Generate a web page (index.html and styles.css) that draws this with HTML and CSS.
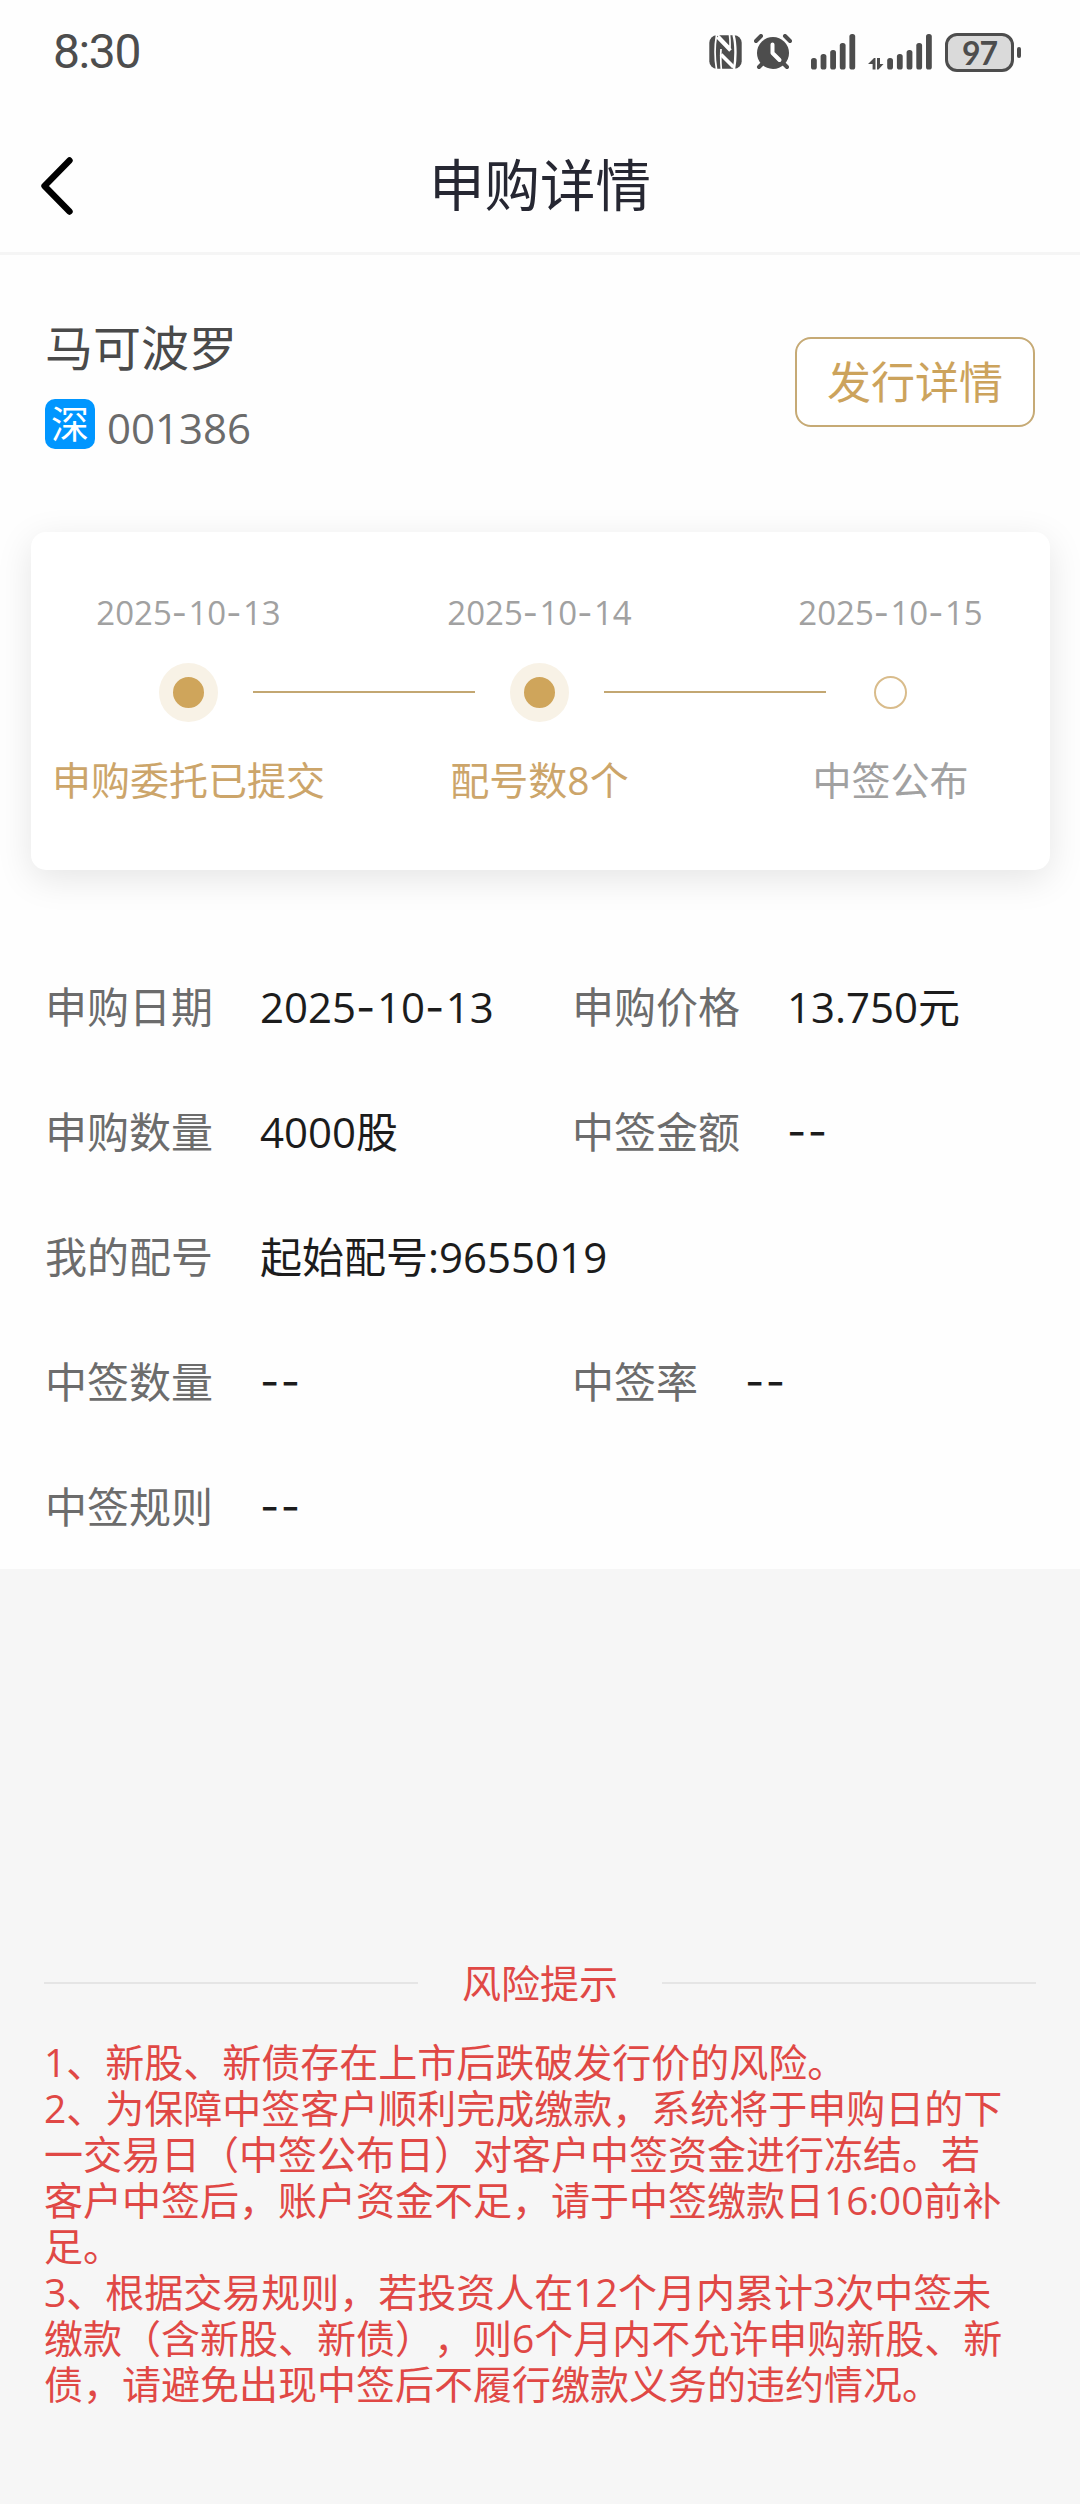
FILE: index.html
```
<!DOCTYPE html>
<html lang="zh-CN">
<head>
  <meta charset="UTF-8" />
  <meta name="viewport" content="width=device-width, initial-scale=1.0" />
  <title>申购详情</title>
  <link rel="stylesheet" href="styles.css">
</head>
<body>
<div class="page">
  <div class="status-bar">
    <div class="time">8:30</div>
    <div class="status-icons">
      <svg class="nfc" width="33" height="34" viewBox="0 0 33 34">
        <rect x="0.3" y="0.3" width="32.4" height="33.4" rx="7.5" fill="#4d4d4d" />
        <path d="M7.5 34 C5.8 24 5.8 10 7.5 0 H9 L21 12.5 C21.2 8 21 4 20.5 0 M12.3 34 C11.6 26 11.6 20 12 14" fill="none" stroke="#fff" stroke-width="1.7" />
        <path d="M8.5 2 L21.5 15.5 M12 19.5 L24.5 32" fill="none" stroke="#fff" stroke-width="3.6" />
        <path d="M24.5 0 C27 9 27 24 25 34" fill="none" stroke="#fff" stroke-width="2.4" />
      </svg>
      <svg class="alarm" width="38" height="36" viewBox="0 0 38 36">
        <circle cx="19" cy="19" r="16" fill="#4d4d4d" />
        <path d="M2 7 L7 2 M31 2 L36 7 M8 30 L5 33 M30 30 L33 33" stroke="#4d4d4d" stroke-width="4" stroke-linecap="round" />
        <path d="M18.5 10.5 V19 L25.5 26" fill="none" stroke="#fff" stroke-width="4" stroke-linecap="round" stroke-linejoin="round" />
      </svg>
      <svg class="signal" width="45" height="36" viewBox="0 0 45 36" fill="#4d4d4d">
        <rect x="0" y="24" width="5.8" height="11.5" rx="2.6" />
        <rect x="9.6" y="20" width="5.8" height="15.5" rx="2.6" />
        <rect x="19.2" y="16" width="5.8" height="19.5" rx="2.6" />
        <rect x="28.8" y="9" width="5.8" height="26.5" rx="2.6" />
        <rect x="38.4" y="0" width="5.8" height="35.5" rx="2.6" />
      </svg>
      <svg class="signal-data" width="65" height="36" viewBox="0 0 65 36" fill="#4d4d4d">
        <path d="M0 30 L6 24 H7.5 V35.5 H4.6 V30 Z M9 24 H12 V30 H15.5 L10.5 35.5 H9 Z" />
        <rect x="19.2" y="24" width="5.8" height="11.5" rx="2.6" />
        <rect x="28.9" y="20" width="5.8" height="15.5" rx="2.6" />
        <rect x="38.6" y="16" width="5.8" height="19.5" rx="2.6" />
        <rect x="48.3" y="9" width="5.8" height="26.5" rx="2.6" />
        <rect x="58" y="0" width="5.8" height="35.5" rx="2.6" />
      </svg>
      <div class="battery">97</div>
      <div class="battery-tip"></div>
    </div>
  </div>

  <div class="header">
    <svg class="back" width="34" height="60" viewBox="0 0 34 60">
      <path d="M29.5 4.5 L4.5 30 L29.5 55.5" fill="none" stroke="#000" stroke-width="6.4" stroke-linecap="round" stroke-linejoin="round" />
    </svg>
    <h1>申购详情</h1>
  </div>

  <div class="stock">
    <div class="stock-info">
      <div class="stock-name">马可波罗</div>
      <div class="stock-code"><span class="market">深</span>001386</div>
    </div>
    <button class="detail-btn">发行详情</button>
  </div>

  <div class="steps">
    <div class="card">
      <div class="step done">
        <div class="date">2025<span class="dash">-</span>10<span class="dash">-</span>13</div>
        <div class="dot"></div>
        <div class="step-name">申购委托已提交</div>
      </div>
      <div class="step-line"></div>
      <div class="step done">
        <div class="date">2025<span class="dash">-</span>10<span class="dash">-</span>14</div>
        <div class="dot"></div>
        <div class="step-name">配号数8个</div>
      </div>
      <div class="step-line"></div>
      <div class="step">
        <div class="date">2025<span class="dash">-</span>10<span class="dash">-</span>15</div>
        <div class="dot"></div>
        <div class="step-name">中签公布</div>
      </div>
    </div>
  </div>

  <div class="info">
    <div class="row">
      <div class="item"><span class="label">申购日期</span><span class="value">2025<span class="dash">-</span>10<span class="dash">-</span>13</span></div>
      <div class="item"><span class="label">申购价格</span><span class="value">13.750元</span></div>
    </div>
    <div class="row">
      <div class="item"><span class="label">申购数量</span><span class="value">4000股</span></div>
      <div class="item"><span class="label">中签金额</span><span class="value dash">--</span></div>
    </div>
    <div class="row">
      <div class="item"><span class="label">我的配号</span><span class="value">起始配号:9655019</span></div>
    </div>
    <div class="row">
      <div class="item"><span class="label">中签数量</span><span class="value dash">--</span></div>
      <div class="item"><span class="label">中签率</span><span class="value dash">--</span></div>
    </div>
    <div class="row">
      <div class="item"><span class="label">中签规则</span><span class="value dash">--</span></div>
    </div>
  </div>

  <div class="risk">
    <div class="risk-title">风险提示</div>
    <p>
      1、新股、新债存在上市后跌破发行价的风险。<br>
      2、为保障中签客户顺利完成缴款，系统将于申购日的下<br>
      一交易日（中签公布日）对客户中签资金进行冻结。若<br>
      客户中签后，账户资金不足，请于中签缴款日16:00前补<br>
      足。<br>
      3、根据交易规则，若投资人在12个月内累计3次中签未<br>
      缴款（含新股、新债），则6个月内不允许申购新股、新<br>
      债，请避免出现中签后不履行缴款义务的违约情况。
    </p>
  </div>
</div>
</body>
</html>
```
FILE: styles.css
```
* {
  box-sizing: border-box;
}
body {
  margin: 0;
  font-family: "Open Sans", "Noto Sans CJK SC", sans-serif;
  background: #f6f6f6;
  text-spacing-trim: space-all;
}
.page {
  width: 1080px;
  height: 2504px;
  overflow: hidden;
}

/* status bar */
.status-bar {
  display: flex;
  align-items: center;
  justify-content: space-between;
  height: 104px;
  padding: 0 59px 0 53px;
  background: #fefefe;
  color: #4d4d4d;
}
.time {
  font-family: Roboto, sans-serif;
  font-size: 48px;
  font-weight: 400;
  line-height: 56px;
  letter-spacing: -1.4px;
}
.status-icons {
  display: flex;
  align-items: center;
}
.status-icons svg {
  display: block;
}
.alarm {
  margin-left: 12px;
}
.signal {
  margin-left: 19px;
}
.signal-data {
  margin-left: 12px;
}
.battery {
  width: 69px;
  height: 39px;
  margin-left: 12px;
  border: 3px solid #4d4d4d;
  border-radius: 12px;
  background: #dadada;
  font-family: Lato, sans-serif;
  font-size: 32px;
  font-weight: 700;
  line-height: 33px;
  letter-spacing: -1px;
  text-align: center;
}
.battery-tip {
  width: 4px;
  height: 11px;
  margin-left: 3px;
  border-radius: 2px;
  background: #4d4d4d;
}

/* header */
.header {
  display: grid;
  grid-template-columns: 34px 1fr 34px;
  align-items: center;
  height: 151px;
  padding: 16px 40px 0;
  border-bottom: 3px solid #f5f5f5;
  background: #fefefe;
}
.back {
  display: block;
}
h1 {
  margin: 0;
  padding-bottom: 2px;
  font-size: 55.5px;
  font-weight: 400;
  line-height: 80px;
  text-align: center;
  color: #262732;
}

/* stock */
.stock {
  display: flex;
  justify-content: space-between;
  align-items: flex-start;
  height: 277px;
  padding: 58px 45px 0;
  background: #fefefe;
}
.stock-info {
  padding-top: 5px;
}
.detail-btn {
  width: 240px;
  height: 90px;
  margin-top: 24px;
  padding: 0 0 4px;
  border: 2px solid #c6aa75;
  border-radius: 16px;
  background: #fff;
  font-family: inherit;
  font-size: 44px;
  color: #cca35c;
}
.stock-name {
  font-size: 48px;
  line-height: 60px;
  color: #4a4a4a;
}
.stock-code {
  display: flex;
  align-items: center;
  gap: 12px;
  height: 60px;
  margin-top: 20px;
  font-size: 42px;
  line-height: 60px;
  color: #6b6b6b;
}
.market {
  width: 50px;
  height: 50px;
  margin-bottom: 8px;
  border-radius: 10px;
  background: #0096ff;
  font-size: 38px;
  line-height: 49px;
  text-align: center;
  color: #fff;
}

/* steps */
.steps {
  padding: 0 30px 0 31px;
  background: #fefefe;
}
.card {
  display: flex;
  align-items: flex-start;
  position: relative;
  height: 338px;
  padding-top: 60px;
  border-radius: 15px;
  background: #fff;
  box-shadow: 0 9px 36px rgba(0, 0, 0, 0.1);
}
.step {
  flex: none;
  display: flex;
  flex-direction: column;
  align-items: center;
  width: 315px;
  margin-right: -93px;
}
.step-line {
  flex: none;
  width: 222px;
  height: 2px;
  margin: 99px -93px 0 0;
  background: #c3a772;
}
.date {
  font-size: 33px;
  line-height: 42px;
  color: #a1a1a1;
}
.dash {
  font-family: Inter, sans-serif;
  letter-spacing: 1.5px;
}
.dot {
  width: 33px;
  height: 33px;
  margin: 42px 0;
  border: 2px solid #d9bc8b;
  border-radius: 50%;
}
.done .dot {
  width: 59px;
  height: 59px;
  margin: 29px 0;
  border: 14px solid #f8f2e6;
  background: #cfa55b;
}
.step-name {
  font-size: 39px;
  line-height: 58px;
  color: #a1a1a1;
  white-space: nowrap;
}
.done .step-name {
  color: #cca56a;
}

/* info list */
.info {
  height: 699px;
  padding: 74px 45px 0;
  background: #fefefe;
}
.row {
  display: grid;
  grid-template-columns: 527px 1fr;
  height: 125px;
  font-size: 42px;
  line-height: 126px;
  white-space: nowrap;
}
.item {
  display: flex;
  gap: 47px;
}
.label {
  color: #6c6c6c;
}
.value {
  color: #1c1c1c;
}

/* risk */
.risk {
  padding: 386px 44px 0;
  color: #e04845;
}
.risk-title {
  display: flex;
  align-items: center;
  gap: 44px;
  font-size: 39px;
  line-height: 56px;
}
.risk-title::before,
.risk-title::after {
  content: "";
  flex: 1;
  height: 2px;
  background: #e5e5e5;
}
.risk p {
  margin: 28px 0 0;
  font-size: 39px;
  line-height: 46px;
  white-space: nowrap;
}
```
